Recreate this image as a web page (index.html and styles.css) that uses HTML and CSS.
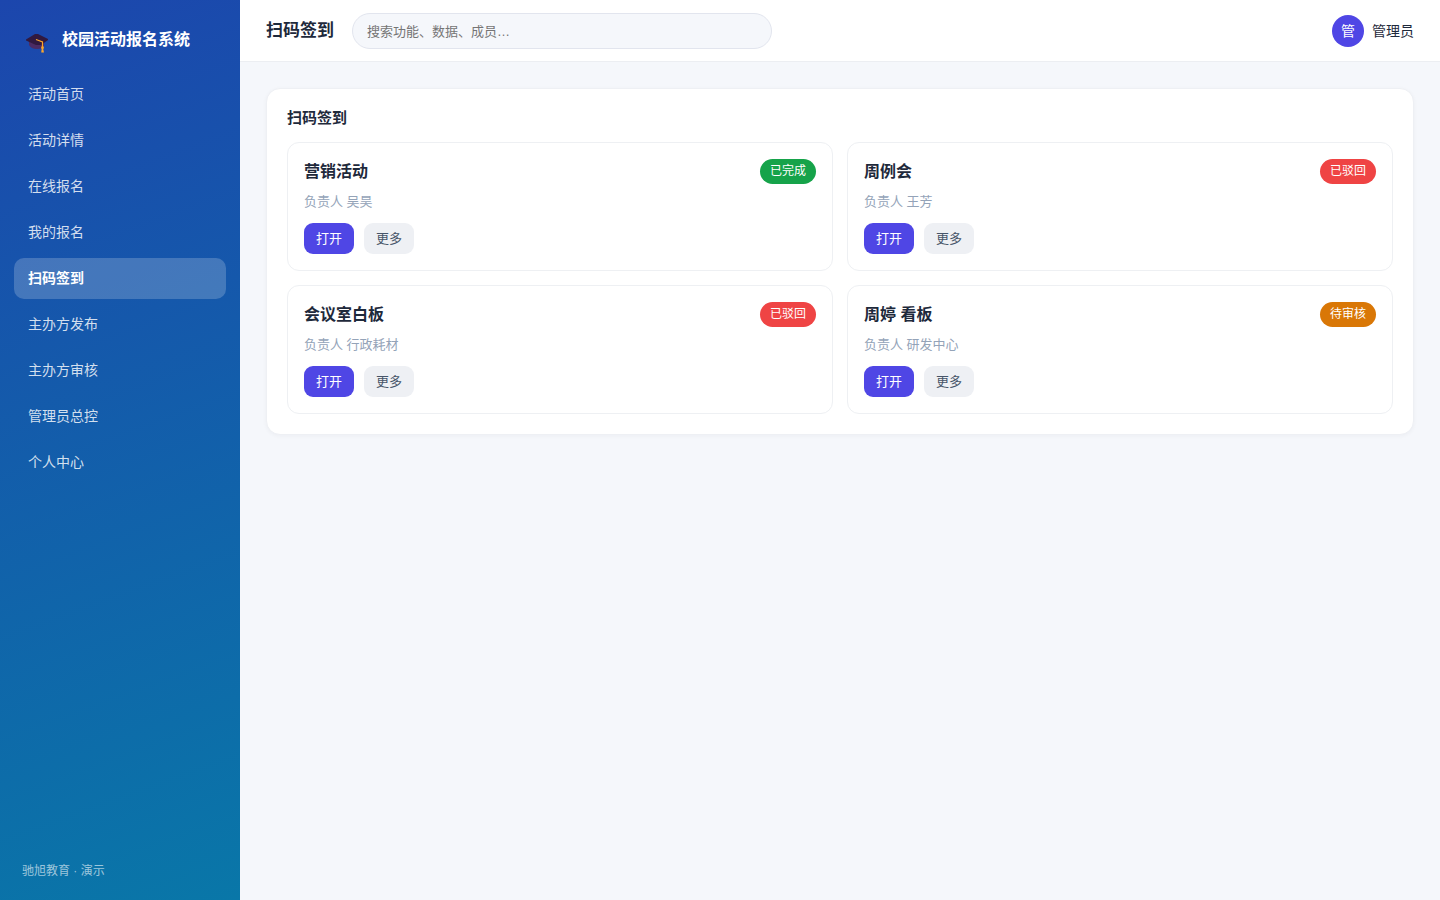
FILE: index.html
```html
<!DOCTYPE html>
<html lang="zh-CN">
<head>
<meta charset="utf-8">
<meta name="viewport" content="width=device-width, initial-scale=1">
<title>校园活动报名系统</title>
<link rel="stylesheet" href="styles.css">
</head>
<body>
<div class="app">
  <aside class="sidebar">
    <div class="brand">
      <svg class="brand-icon" viewBox="0 0 24 24" aria-hidden="true">
        <path d="M3 12v5q2 4 8 4t7-3v-6z" fill="#4b2b63"/>
        <path d="M0 11.500l9-5.500h3l10 5v1l-7 5h-5L0 12.500z" fill="#31193f"/>
        <path d="M10 11.500l6.500 2.500v6" fill="none" stroke="#fba72c" stroke-width="1.2"/>
        <path d="M15.800 18h1.400l.8 2-.8 1 .8 3.500h-2.800l.5-3.500-.7-1z" fill="#fba72c"/>
      </svg>
      <span class="brand-name">校园活动报名系统</span>
    </div>
    <nav class="nav">
      <a class="nav-item" href="#">活动首页</a>
      <a class="nav-item" href="#">活动详情</a>
      <a class="nav-item" href="#">在线报名</a>
      <a class="nav-item" href="#">我的报名</a>
      <a class="nav-item active" href="#" aria-current="page">扫码签到</a>
      <a class="nav-item" href="#">主办方发布</a>
      <a class="nav-item" href="#">主办方审核</a>
      <a class="nav-item" href="#">管理员总控</a>
      <a class="nav-item" href="#">个人中心</a>
    </nav>
    <div class="sidebar-foot">驰旭教育 · 演示</div>
  </aside>
  <div class="main">
    <header class="topbar">
      <h1 class="page-title">扫码签到</h1>
      <input class="search" type="search" aria-label="搜索" placeholder="搜索功能、数据、成员…">
      <div class="user">
        <span class="avatar">管</span>
        <span>管理员</span>
      </div>
    </header>
    <main class="content">
      <section class="panel">
        <h2 class="panel-title">扫码签到</h2>
        <div class="grid">
          <article class="card">
            <div class="card-head"><h3 class="card-title">营销活动</h3><span class="badge done">已完成</span></div>
            <p class="owner">负责人 吴昊</p>
            <div class="actions"><button class="btn primary" type="button">打开</button><button class="btn" type="button">更多</button></div>
          </article>
          <article class="card">
            <div class="card-head"><h3 class="card-title">周例会</h3><span class="badge rejected">已驳回</span></div>
            <p class="owner">负责人 王芳</p>
            <div class="actions"><button class="btn primary" type="button">打开</button><button class="btn" type="button">更多</button></div>
          </article>
          <article class="card">
            <div class="card-head"><h3 class="card-title">会议室白板</h3><span class="badge rejected">已驳回</span></div>
            <p class="owner">负责人 行政耗材</p>
            <div class="actions"><button class="btn primary" type="button">打开</button><button class="btn" type="button">更多</button></div>
          </article>
          <article class="card">
            <div class="card-head"><h3 class="card-title">周婷 看板</h3><span class="badge pending">待审核</span></div>
            <p class="owner">负责人 研发中心</p>
            <div class="actions"><button class="btn primary" type="button">打开</button><button class="btn" type="button">更多</button></div>
          </article>
        </div>
      </section>
    </main>
  </div>
</div>
</body>
</html>
```
FILE: styles.css
```css
* { box-sizing: border-box; }
body {
  margin: 0;
  font-family: "Liberation Sans", "Noto Sans CJK SC", sans-serif;
  font-size: 14px;
  line-height: 21px;
  color: #1e293b;
  background: #f5f7fb;
}
h1, h2, h3, p { margin: 0; }
button, input { font-family: inherit; }
.app { display: flex; min-height: 100vh; }
.sidebar {
  flex: none;
  width: 240px;
  padding: 22px 14px 18px;
  display: flex;
  flex-direction: column;
  color: #fff;
  background: linear-gradient(160deg, #1c46ad, #0977a8);
}
.brand { display: flex; align-items: center; gap: 12px; padding: 6px 12px 20px; }
.brand-icon { width: 24px; height: 24px; flex: none; overflow: visible; }
.brand-name { font-size: 16px; line-height: 24px; font-weight: 700; }
.nav { display: flex; flex-direction: column; gap: 5px; padding-top: 2px; }
.nav-item {
  padding: 10px 14px;
  border-radius: 10px;
  color: rgba(255, 255, 255, .82);
  text-decoration: none;
}
.nav-item.active { color: #fff; font-weight: 700; background: rgba(255, 255, 255, .2); }
.sidebar-foot {
  margin-top: auto;
  padding: 0 8px;
  font-size: 12px;
  color: rgba(255, 255, 255, .6);
}
.main { flex: 1; min-width: 0; }
.topbar {
  display: flex;
  align-items: center;
  gap: 18px;
  padding: 13px 26px 12px;
  background: #fff;
  border-bottom: 1px solid #eceef2;
}
.page-title { font-size: 17px; line-height: 26px; }
.search {
  flex: 0 1 420px;
  min-width: 0;
  height: 36px;
  padding: 0 14px;
  border: 1px solid #e2e5ee;
  border-radius: 18px;
  font-size: 13px;
  background: #f5f7fb;
  outline: none;
}
.search::placeholder { color: #757575; }
.user { display: flex; align-items: center; gap: 8px; margin-left: auto; }
.avatar {
  width: 32px;
  height: 32px;
  border-radius: 50%;
  display: grid;
  place-items: center;
  color: #fff;
  background: #4f46e5;
}
.content { padding: 26px; }
.panel {
  padding: 18px 20px 20px;
  border: 1px solid #eef0f4;
  border-radius: 14px;
  background: #fff;
  box-shadow: 0 1px 4px rgba(15, 23, 42, .04);
}
.panel-title { margin-bottom: 14px; font-size: 15px; line-height: 21px; }
.grid { display: grid; grid-template-columns: repeat(auto-fit, minmax(400px, 1fr)); gap: 14px; }
.card { padding: 16px; border: 1px solid #eef0f3; border-radius: 12px; }
.card-head { display: flex; align-items: center; justify-content: space-between; }
.card-title { font-size: 16px; line-height: 24px; }
.badge {
  padding: 2px 10px;
  border-radius: 13px;
  font-size: 12px;
  color: #fff;
}
.done { background: #16a34a; }
.rejected { background: #ef4444; }
.pending { background: #d97706; }
.owner { margin: 8px 0 11px; font-size: 13px; line-height: 20px; color: #94a3b8; }
.actions { display: flex; gap: 10px; }
.btn {
  padding: 5px 12px;
  border: 0;
  border-radius: 9px;
  font-size: 13px;
  line-height: 21px;
  color: #475569;
  background: #eef0f4;
}
.btn.primary { color: #fff; background: #4f46e5; }
```
